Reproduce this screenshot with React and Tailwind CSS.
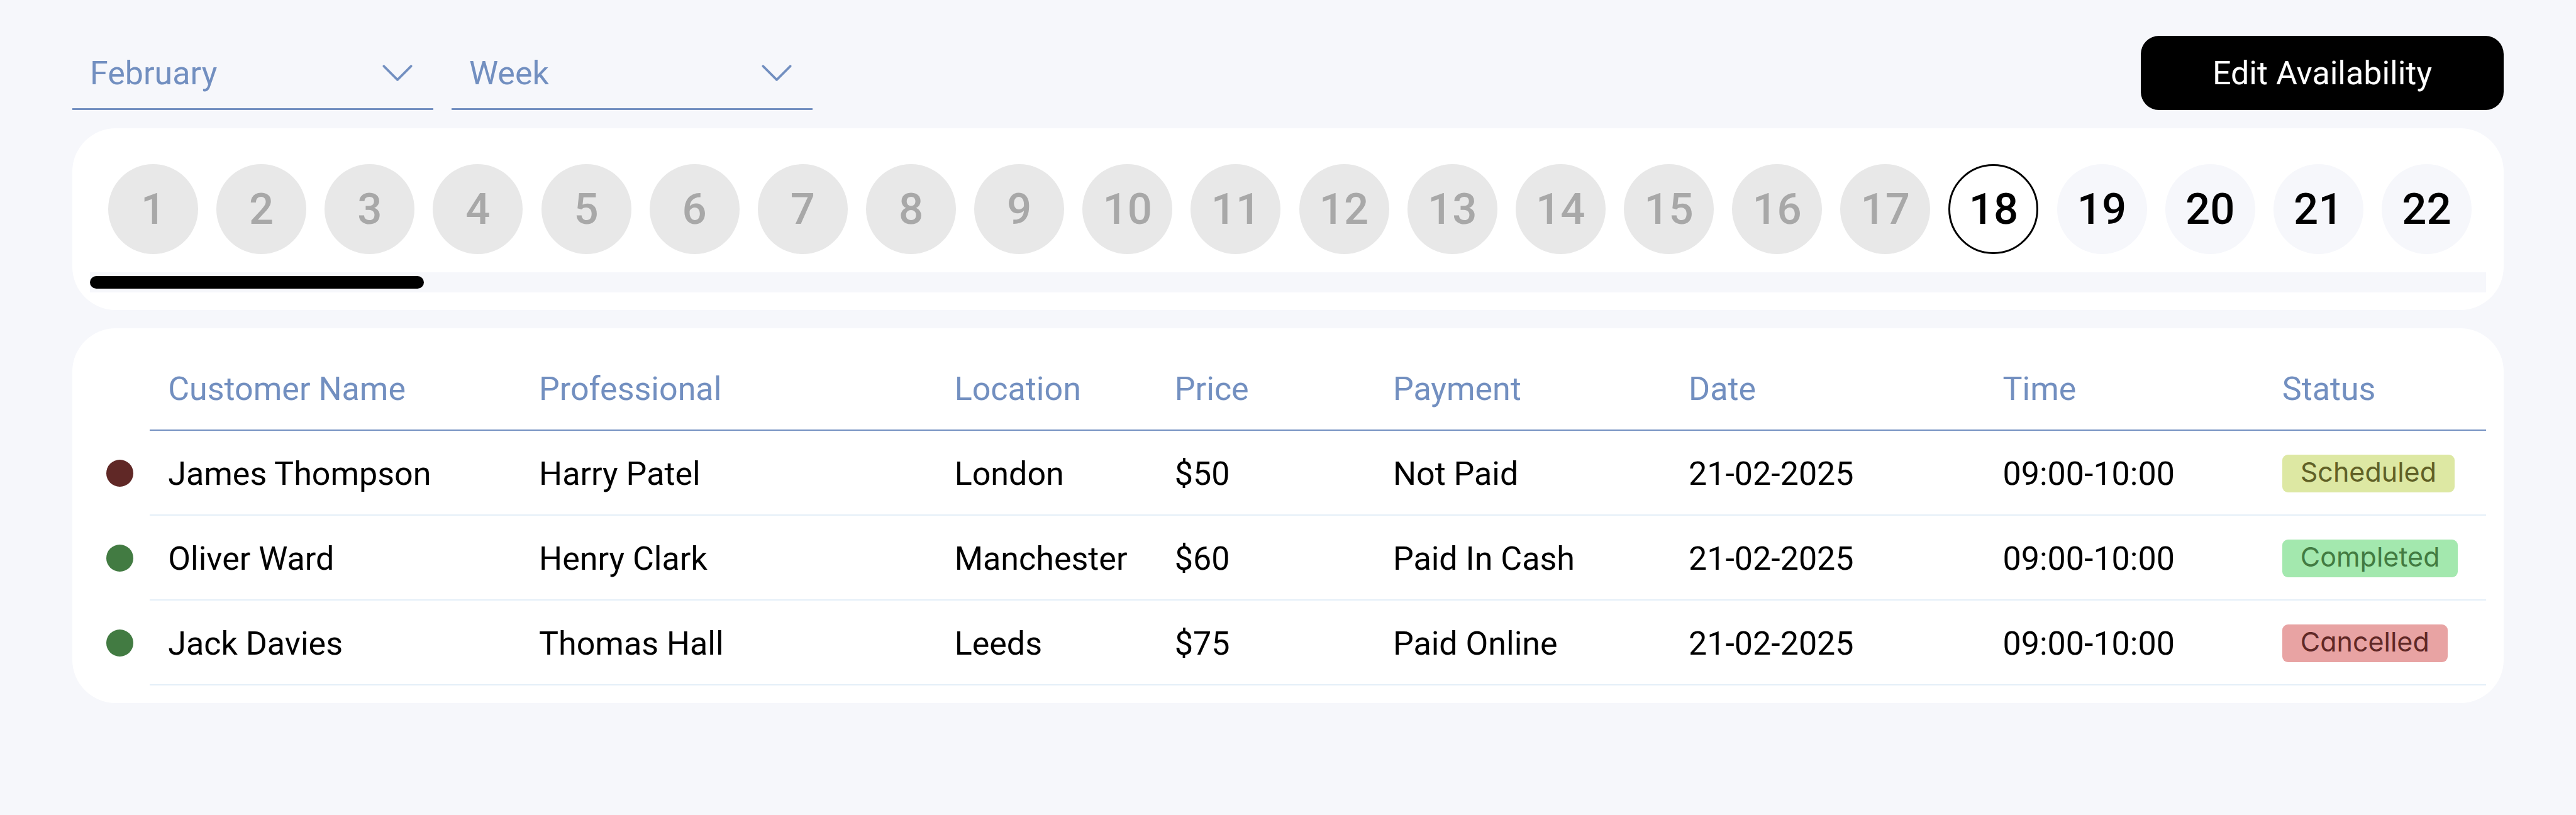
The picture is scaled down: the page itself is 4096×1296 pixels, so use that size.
import { useState } from "react";

const pastDays = Array.from({ length: 17 }, (_, i) => i + 1);
const openDays = [18, 19, 20, 21, 22];

const columns = [
  { label: "Customer Name", width: "w-[15.48%]" },
  { label: "Professional", width: "w-[17.34%]" },
  { label: "Location", width: "w-[9.19%]" },
  { label: "Price", width: "w-[9.11%]" },
  { label: "Payment", width: "w-[12.34%]" },
  { label: "Date", width: "w-[13.11%]" },
  { label: "Time", width: "w-[11.66%]" },
  { label: "Status", width: "w-[9.27%]" },
];

const bookings = [
  {
    dot: "bg-[#602826]",
    cells: ["James Thompson", "Harry Patel", "London", "$50", "Not Paid", "21-02-2025", "09:00-10:00"],
    status: "Scheduled",
    badge: "bg-[#dde8a3] text-[#606026]",
  },
  {
    dot: "bg-[#427b42]",
    cells: ["Oliver Ward", "Henry Clark", "Manchester", "$60", "Paid In Cash", "21-02-2025", "09:00-10:00"],
    status: "Completed",
    badge: "bg-[#a3e8ae] text-[#427b42]",
  },
  {
    dot: "bg-[#427b42]",
    cells: ["Jack Davies", "Thomas Hall", "Leeds", "$75", "Paid Online", "21-02-2025", "09:00-10:00"],
    status: "Cancelled",
    badge: "bg-[#e8a3a3] text-[#602826]",
  },
];

function Dropdown({ label, options }) {
  return (
    <div className="grid w-[574px] items-center">
      <select
        aria-label={label}
        className="col-start-1 row-start-1 h-[118px] w-full appearance-none border-b-3 border-[#728fc0] bg-transparent px-[28px] pt-[5px] text-[52px] leading-[78px] text-[#728fc0]"
      >
        {options.map((o) => (
          <option key={o}>{o}</option>
        ))}
      </select>
      <svg
        className="pointer-events-none col-start-1 row-start-1 mr-[28px] h-[58px] w-[58px] justify-self-end text-[#728fc0]"
        viewBox="0 0 16 16"
        fill="currentColor"
        aria-hidden="true"
      >
        <path
          fillRule="evenodd"
          d="M1.646 4.646a.5.5 0 0 1 .708 0L8 10.293l5.646-5.647a.5.5 0 0 1 .708.708l-6 6a.5.5 0 0 1-.708 0l-6-6a.5.5 0 0 1 0-.708"
        />
      </svg>
    </div>
  );
}

export default function App() {
  const [selected, setSelected] = useState(18);
  return (
    <main className="flex min-h-screen flex-col gap-[29px] bg-[#f6f7fb] px-[115px] pt-[57px] font-[Roboto,sans-serif] text-black">
      <div className="flex items-center justify-between">
        <div className="flex gap-[29px]">
          <Dropdown label="Month" options={["February", "March", "April"]} />
          <Dropdown label="Range" options={["Week", "Month"]} />
        </div>
        <button className="h-[118px] rounded-[29px] bg-black px-[114px] pt-[2px] text-[52px] leading-[78px] text-white">
          Edit Availability
        </button>
      </div>

      <section className="rounded-[69px] bg-white px-[28px] pt-[57px] pb-[28px]">
        <div className="flex justify-between pr-[23px] pl-[29px] text-[69px] font-medium">
          {pastDays.map((d) => (
            <button
              key={d}
              disabled
              className="h-[143px] w-[143px] rounded-full bg-[#e8e8e8] text-[#a8a8a8]"
            >
              {d}
            </button>
          ))}
          {openDays.map((d) => (
            <button
              key={d}
              onClick={() => setSelected(d)}
              className={
                d === selected
                  ? "h-[143px] w-[143px] rounded-full border-3 border-black bg-white"
                  : "h-[143px] w-[143px] rounded-full bg-[#f6f7fb]"
              }
            >
              {d}
            </button>
          ))}
        </div>
        <div className="mt-[29px] flex h-[32px] items-center bg-[#f6f7fb]">
          <div className="h-[20px] w-[531px] rounded-full bg-black" />
        </div>
      </section>

      <section className="rounded-[69px] bg-white p-[28px]">
        <table className="w-full table-fixed border-separate border-spacing-0 text-left text-[52px] leading-[78px]">
          <colgroup>
            <col className="w-[2.50%]" />
            {columns.map((c) => (
              <col key={c.label} className={c.width} />
            ))}
          </colgroup>
          <thead>
            <tr className="h-[135px] text-[#728fc0]">
              <td />
              {columns.map((c) => (
                <th
                  key={c.label}
                  scope="col"
                  className="border-b-2 border-[#728fc0] pt-[5px] pl-[29px] font-normal whitespace-nowrap"
                >
                  {c.label}
                </th>
              ))}
            </tr>
          </thead>
          <tbody>
            {bookings.map((b) => (
              <tr key={b.cells[0]} className="h-[135px]">
                <td>
                  <div className={`ml-[26px] h-[43px] w-[43px] rounded-full ${b.dot}`} />
                </td>
                {b.cells.map((c, i) => (
                  <td key={i} className="border-b-2 border-[#e4eff8] pt-[5px] pl-[29px] whitespace-nowrap">
                    {c}
                  </td>
                ))}
                <td className="border-b-2 border-[#e4eff8] pt-[2px] pl-[29px]">
                  <span
                    className={`block w-fit rounded-[9px] px-[29px] pb-[6px] font-[Inter,sans-serif] text-[43px] leading-[54px] [font-feature-settings:'cv11'] ${b.badge}`}
                  >
                    {b.status}
                  </span>
                </td>
              </tr>
            ))}
          </tbody>
        </table>
      </section>
    </main>
  );
}
